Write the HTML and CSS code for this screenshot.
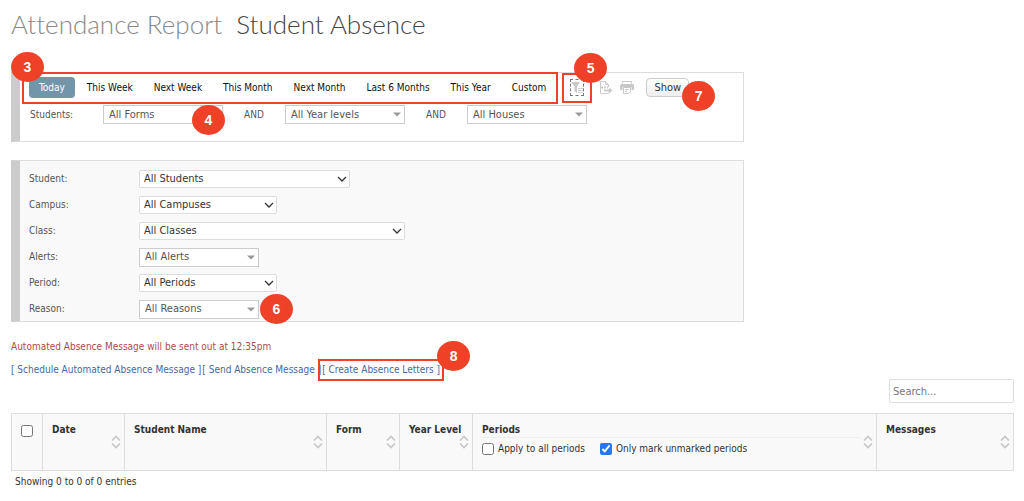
FILE: index.html
```
<!DOCTYPE html>
<html lang="en">
<head>
<meta charset="utf-8">
<title>Attendance Report - Student Absence</title>
<link rel="stylesheet" href="styles.css">
</head>
<body>
<svg class="sprite" aria-hidden="true">
  <symbol id="caret" viewBox="0 0 8 5"><path d="M0 0.500h8L4 4.500z" fill="#999"/></symbol>
  <symbol id="chevron" viewBox="0 0 10 6"><path d="M1 1l4 4 4-4" fill="none" stroke="#333" stroke-width="1.300"/></symbol>
  <symbol id="sort" viewBox="0 0 10 14"><path d="M1 5.500l4-4 4 4M1 8.500l4 4 4-4" fill="none" stroke="#c8c8c8" stroke-width="1.700"/></symbol>
</svg>
<header class="heading">
  <h1 class="title"><span class="section">Attendance Report</span> <span>Student Absence</span></h1>
</header>
<main>
  <form class="filters">
    <section class="panel">
      <div class="toolbar">
        <nav class="tabs marked">
          <button type="button" class="tab active">Today</button>
          <button type="button" class="tab">This Week</button>
          <button type="button" class="tab">Next Week</button>
          <button type="button" class="tab">This Month</button>
          <button type="button" class="tab">Next Month</button>
          <button type="button" class="tab">Last 6 Months</button>
          <button type="button" class="tab">This Year</button>
          <button type="button" class="tab">Custom</button>
          <span class="badge badge-tabs">3</span>
        </nav>
        <div class="filter-mark marked">
          <button type="button" class="icon-button focused" aria-label="Filter">
            <svg width="12" height="15" viewBox="0 0 12 15"><path d="M0 2h9L6 6.500V13L3.500 11V6.500z" fill="#c8c8c8"/><path d="M7 8.500h5M7 10.500h5M7 12.500h5" stroke="#d4d4d4"/></svg>
          </button>
          <span class="badge badge-filter">5</span>
        </div>
        <div class="actions">
          <button type="button" class="icon-button" aria-label="Export">
            <svg width="14" height="15" viewBox="0 0 14 15" fill="none" stroke="#ccc"><path d="M9.500 7V4.500L6.500 1.500h-5v12h8v-1M6.500 1.500v3h3"/><path d="M2 7.500h7" stroke-width="2" stroke-dasharray="2 1"/><path d="M5 10.500h6" stroke-width="2"/><path d="M10 7.500l3.500 3-3.500 3z" fill="#c8c8c8" stroke="none"/></svg>
          </button>
          <button type="button" class="icon-button" aria-label="Print">
            <svg width="14" height="15" viewBox="0 0 14 15" fill="none" stroke="#c8c8c8"><path d="M2.500 3.500v-2h9v2"/><path d="M1 4h12l1 1v5h-2.500V7h-9v3H0V5z" fill="#c8c8c8" stroke="none"/><path d="M3.500 7.500v6h5l2-2v-4zM5 9.500h4M5 11.500h2"/></svg>
          </button>
        </div>
        <div class="show-wrap">
          <button type="button" class="show">Show</button>
          <span class="badge badge-show">7</span>
        </div>
      </div>
      <div class="students">
        <label for="forms" class="students-label">Students:</label>
        <div class="picker flat">
          <select id="forms"><option>All Forms</option></select><svg class="caret"><use href="#caret"/></svg>
          <span class="badge badge-forms">4</span>
        </div>
        <label for="levels" class="and">AND</label>
        <div class="picker flat"><select id="levels"><option>All Year levels</option></select><svg class="caret"><use href="#caret"/></svg></div>
        <label for="houses" class="and">AND</label>
        <div class="picker flat"><select id="houses"><option>All Houses</option></select><svg class="caret"><use href="#caret"/></svg></div>
      </div>
    </section>
    <section class="panel details">
      <div class="field"><label for="student">Student:</label><div class="picker native wide"><select id="student"><option>All Students</option></select><svg class="chevron"><use href="#chevron"/></svg></div></div>
      <div class="field"><label for="campus">Campus:</label><div class="picker native"><select id="campus"><option>All Campuses</option></select><svg class="chevron"><use href="#chevron"/></svg></div></div>
      <div class="field"><label for="class">Class:</label><div class="picker native widest"><select id="class"><option>All Classes</option></select><svg class="chevron"><use href="#chevron"/></svg></div></div>
      <div class="field"><label for="alerts">Alerts:</label><div class="picker flat"><select id="alerts"><option>All Alerts</option></select><svg class="caret"><use href="#caret"/></svg></div></div>
      <div class="field"><label for="period">Period:</label><div class="picker native"><select id="period"><option>All Periods</option></select><svg class="chevron"><use href="#chevron"/></svg></div></div>
      <div class="field"><label for="reason">Reason:</label><div class="picker flat"><select id="reason"><option>All Reasons</option></select><svg class="caret"><use href="#caret"/></svg><span class="badge badge-reason">6</span></div></div>
    </section>
  </form>
  <p class="notice">Automated Absence Message will be sent out at 12:35pm</p>
  <div class="links">
    <a href="#schedule">[ Schedule Automated Absence Message ]</a>
    <a href="#send">[ Send Absence Message ]</a>
    <span class="letters marked"><a href="#letters">[ Create Absence Letters ]</a><span class="badge badge-letters">8</span></span>
  </div>
  <div class="search-row"><input type="search" class="search" placeholder="Search..." aria-label="Search"></div>
  <table class="report">
    <colgroup><col class="c-check"><col class="c-date"><col class="c-name"><col class="c-form"><col class="c-form"><col><col class="c-messages"></colgroup>
    <thead>
      <tr>
        <th class="check-cell"><input type="checkbox" class="box" aria-label="Select all"></th>
        <th>Date<svg class="sort"><use href="#sort"/></svg></th>
        <th>Student Name<svg class="sort"><use href="#sort"/></svg></th>
        <th>Form<svg class="sort"><use href="#sort"/></svg></th>
        <th>Year Level<svg class="sort"><use href="#sort"/></svg></th>
        <th>
          <div class="periods-title">Periods</div>
          <div class="options">
            <label class="option"><input type="checkbox" class="box">Apply to all periods</label>
            <label class="option"><input type="checkbox" class="box" checked>Only mark unmarked periods</label>
          </div>
          <svg class="sort"><use href="#sort"/></svg>
        </th>
        <th>Messages<svg class="sort"><use href="#sort"/></svg></th>
      </tr>
    </thead>
  </table>
  <p class="summary">Showing 0 to 0 of 0 entries</p>
</main>
</body>
</html>
```
FILE: styles.css
```
* { box-sizing: border-box; }
body {
  margin: 0;
  padding: 6px 10px 0 11px;
  background: #fff;
  color: #333;
  font: 10px/14px "DejaVu Sans Condensed", "DejaVu Sans", sans-serif;
}
button, select, input { font: inherit; color: inherit; margin: 0; }
.sprite { position: absolute; width: 0; height: 0; }
.title {
  display: flex;
  gap: 14px;
  margin: 0;
  color: #444;
  font: 300 26px/36px Lato, "Noto Sans", sans-serif;
  font-variant-ligatures: none;
}
.section { color: #888; }
.filters {
  display: grid;
  gap: 18px;
  max-width: 733px;
  padding-top: 30px;
}
.panel {
  border: 1px solid #ddd;
  border-left: 9px solid #ccc;
  min-height: 70px;
}
.toolbar { display: flex; align-items: center; padding-left: 4px; height: 29px; }
.marked { position: relative; outline: 2px solid #ee4128; }
.tabs { display: flex; align-items: center; padding: 4px 0 4px 5px; height: 28px; gap: 1px; }
.tab {
  border: 0;
  border-radius: 4px;
  padding: 0 10px;
  height: 21px;
  background: none;
  color: #111;
  white-space: nowrap;
}
.active { background: #7295aa; color: #fff; margin-right: 1px; }
.filter-mark { display: flex; align-items: center; justify-content: center; width: 26px; height: 26px; margin-left: 8px; }
.icon-button { display: flex; padding: 0; border: 0; background: none; }
.focused { outline: 1px dashed #777; }
.actions { display: flex; gap: 7px; margin-left: 9px; }
.show-wrap { position: relative; margin-left: 12px; }
.show {
  display: block;
  width: 43px;
  height: 19px;
  padding: 0;
  border: 1px solid #ccc;
  border-radius: 4px;
  background: linear-gradient(#fff, #eee);
  font-size: 11px;
}
.badge {
  position: absolute;
  z-index: 1;
  width: 33px;
  height: 30px;
  border-radius: 50%;
  background: #ee4128;
  color: #fff;
  font: bold 14px/30px "Liberation Sans", Arial, sans-serif;
  text-align: center;
}
.badge-tabs { left: -13px; top: -22px; }
.badge-filter { left: 10px; top: -22px; }
.badge-show { left: 36px; top: 3px; }
.badge-forms { left: 89px; top: 0; }
.badge-reason { left: 121px; top: -6px; }
.badge-letters { right: -30px; top: -22px; }
.students { display: flex; align-items: center; padding: 3px 0 0 10px; color: #555; }
.students-label { width: 73px; }
.and { width: 62px; text-align: center; }
.picker { position: relative; }
.picker select {
  display: block;
  width: 100%;
  height: 100%;
  appearance: none;
  padding: 0 20px 0 5px;
  background: #fff;
  border: 1px solid #ccc;
  font-size: 11px;
}
.flat { width: 120px; height: 19px; color: #555; }
.native { width: 138px; height: 18px; }
.picker.native select { border-color: #ddd; border-radius: 2px; padding-left: 4px; }
.wide { width: 211px; }
.widest { width: 266px; }
.caret, .chevron, .sort { position: absolute; pointer-events: none; }
.caret { right: 4px; top: 7px; width: 8px; height: 5px; }
.chevron { right: 3px; top: 6px; width: 10px; height: 6px; }
.details {
  display: grid;
  gap: 6px;
  padding: 8px 0 2px 9px;
  background: #f9f9f9;
}
.field { display: flex; align-items: center; height: 20px; }
.field label { width: 110px; color: #555; }
.notice { margin: 18px 0 0; color: #b24a4a; }
.links { display: flex; gap: 1px; padding-top: 9px; }
.links a { color: #4668a0; text-decoration: none; white-space: nowrap; }
.letters { outline-offset: 2px; }
.search-row { display: flex; justify-content: flex-end; padding-top: 2px; }
.search {
  width: 125px;
  height: 24px;
  padding: 0 3px;
  border: 1px solid #ddd;
  border-radius: 2px;
  font-size: 11px;
}
.search::placeholder { color: #777; }
.report {
  width: 100%;
  margin-top: 10px;
  table-layout: fixed;
  border-collapse: collapse;
  background: #f9f9f9;
}
.c-check { width: 31px; }
.c-date { width: 82px; }
.c-name { width: 202px; }
.c-form { width: 73px; }
.c-messages { width: 137px; }
.report th {
  position: relative;
  height: 57px;
  padding: 9px 8px 0 9px;
  border: 1px solid #ddd;
  text-align: left;
  vertical-align: top;
  white-space: nowrap;
}
.report .check-cell { padding-top: 11px; }
.sort { right: 3px; top: 21px; width: 10px; height: 14px; }
.periods-title { margin-right: 7px; border-bottom: 1px solid #eee; }
.options { display: flex; gap: 15px; padding-top: 4px; font-weight: normal; }
.option { display: flex; align-items: center; gap: 4px; }
.box { width: 12px; height: 12px; margin: 0; accent-color: #2478f5; }
.summary { margin: 4px 4px 0; }
```
